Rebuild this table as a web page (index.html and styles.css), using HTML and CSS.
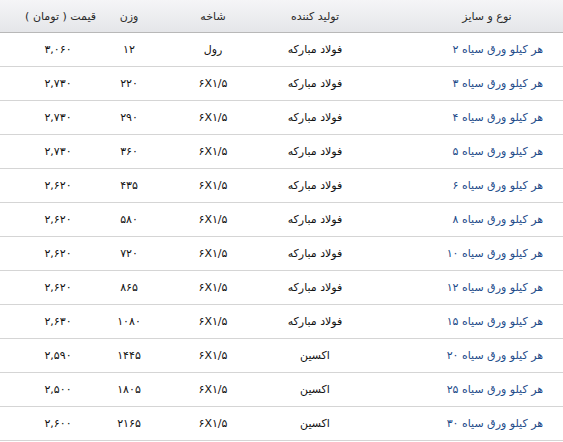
FILE: index.html
```html
<!DOCTYPE html>
<html lang="fa" dir="rtl">
<head>
<meta charset="utf-8">
<link rel="stylesheet" href="styles.css">
</head>
<body>
<div class="table">
  <div class="row head">
    <div class="c name">نوع و سایز</div>
    <div class="c maker">تولید کننده</div>
    <div class="c branch">شاخه</div>
    <div class="c weight">وزن</div>
    <div class="c price">قیمت ( تومان )</div>
  </div>
  <div class="row"><div class="c name">هر کیلو ورق سیاه ۲</div><div class="c maker">فولاد مبارکه</div><div class="c branch">رول</div><div class="c weight">۱۲</div><div class="c price">۳,۰۶۰</div></div>
  <div class="row"><div class="c name">هر کیلو ورق سیاه ۳</div><div class="c maker">فولاد مبارکه</div><div class="c branch"><span class="ltr">۶X۱/۵</span></div><div class="c weight">۲۲۰</div><div class="c price">۲,۷۳۰</div></div>
  <div class="row"><div class="c name">هر کیلو ورق سیاه ۴</div><div class="c maker">فولاد مبارکه</div><div class="c branch"><span class="ltr">۶X۱/۵</span></div><div class="c weight">۲۹۰</div><div class="c price">۲,۷۳۰</div></div>
  <div class="row"><div class="c name">هر کیلو ورق سیاه ۵</div><div class="c maker">فولاد مبارکه</div><div class="c branch"><span class="ltr">۶X۱/۵</span></div><div class="c weight">۳۶۰</div><div class="c price">۲,۷۳۰</div></div>
  <div class="row"><div class="c name">هر کیلو ورق سیاه ۶</div><div class="c maker">فولاد مبارکه</div><div class="c branch"><span class="ltr">۶X۱/۵</span></div><div class="c weight">۴۳۵</div><div class="c price">۲,۶۲۰</div></div>
  <div class="row"><div class="c name">هر کیلو ورق سیاه ۸</div><div class="c maker">فولاد مبارکه</div><div class="c branch"><span class="ltr">۶X۱/۵</span></div><div class="c weight">۵۸۰</div><div class="c price">۲,۶۲۰</div></div>
  <div class="row"><div class="c name">هر کیلو ورق سیاه ۱۰</div><div class="c maker">فولاد مبارکه</div><div class="c branch"><span class="ltr">۶X۱/۵</span></div><div class="c weight">۷۲۰</div><div class="c price">۲,۶۲۰</div></div>
  <div class="row"><div class="c name">هر کیلو ورق سیاه ۱۲</div><div class="c maker">فولاد مبارکه</div><div class="c branch"><span class="ltr">۶X۱/۵</span></div><div class="c weight">۸۶۵</div><div class="c price">۲,۶۲۰</div></div>
  <div class="row"><div class="c name">هر کیلو ورق سیاه ۱۵</div><div class="c maker">فولاد مبارکه</div><div class="c branch"><span class="ltr">۶X۱/۵</span></div><div class="c weight">۱۰۸۰</div><div class="c price">۲,۶۳۰</div></div>
  <div class="row"><div class="c name">هر کیلو ورق سیاه ۲۰</div><div class="c maker">اکسین</div><div class="c branch"><span class="ltr">۶X۱/۵</span></div><div class="c weight">۱۴۴۵</div><div class="c price">۲,۵۹۰</div></div>
  <div class="row"><div class="c name">هر کیلو ورق سیاه ۲۵</div><div class="c maker">اکسین</div><div class="c branch"><span class="ltr">۶X۱/۵</span></div><div class="c weight">۱۸۰۵</div><div class="c price">۲,۵۰۰</div></div>
  <div class="row"><div class="c name">هر کیلو ورق سیاه ۳۰</div><div class="c maker">اکسین</div><div class="c branch"><span class="ltr">۶X۱/۵</span></div><div class="c weight">۲۱۶۵</div><div class="c price">۲,۶۰۰</div></div>
</div>
</body>
</html>
```

FILE: styles.css
```css
html, body {
  margin: 0;
  padding: 0;
  background: #ffffff;
}
body {
  font-family: "DejaVu Sans", "Liberation Sans", sans-serif;
  font-size: 11px;
  color: #111111;
}
.table {
  width: 563px;
  direction: rtl;
}
.row {
  display: grid;
  grid-template-columns: 183px 130px 74px 80px 96px;
  height: 33px;
  border-bottom: 1px solid #d5d5d5;
  align-items: center;
}
.row.head {
  height: 32px;
  background: linear-gradient(#f5f5f7, #e5e6e9);
  border-bottom: 1px solid #b8b8b8;
  color: #2a2a2a;
}
.c {
  white-space: nowrap;
  text-align: center;
}
.name {
  text-align: right;
  padding-right: 20px;
  color: #1d4b8a;
}
.head .name {
  text-align: center;
  padding-right: 0;
  padding-left: 31px;
  color: #2a2a2a;
}
.weight {
  padding-right: 14px;
}
.price {
  padding-left: 20px;
}
.head .price {
  padding-left: 28px;
}
.ltr {
  direction: ltr;
  unicode-bidi: isolate;
  display: inline-block;
}
```
